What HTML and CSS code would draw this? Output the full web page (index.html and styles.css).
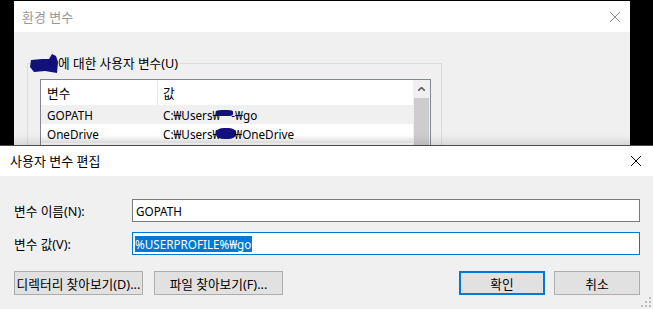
FILE: index.html
```html
<!DOCTYPE html>
<html lang="ko">
<head>
  <meta charset="UTF-8">
  <title>사용자 변수 편집</title>
  <link rel="stylesheet" href="styles.css">
</head>
<body>
  <div class="screen">
    <!-- Background window: 환경 변수 -->
    <div class="env-window">
      <div class="titlebar titlebar-back">
        <span class="title title-muted">환경 변수</span>
        <svg class="close close-muted" viewBox="0 0 10 10"><path d="M0 0L10 10M10 0L0 10"></path></svg>
      </div>
      <div class="env-body">
        <fieldset class="group">
          <legend class="group-label">
            <svg class="scribble" width="28" height="19" viewBox="0 0 28 19"><polygon points="1,6 12,5 19,5 22,0 26,2 28,8 27,19 15,17 4,18 0,13"></polygon></svg>
            <span class="ko">에 대한 사용자 변수(U)</span>
          </legend>
          <div class="list">
            <div class="list-rows">
              <div class="row row-head">
                <span class="col-name ko">변수</span>
                <span class="col-value col-sep ko">값</span>
              </div>
              <div class="row row-alt">
                <span class="col-name">GOPATH</span>
                <span class="col-value">C:₩Users₩<i class="blob blob-sm"></i>-₩go</span>
              </div>
              <div class="row row-fade">
                <span class="col-name">OneDrive</span>
                <span class="col-value">C:₩Users₩<i class="blob"></i>₩OneDrive</span>
              </div>
            </div>
            <div class="scrollbar">
              <div class="scroll-up">
                <svg viewBox="0 0 7 4"><path d="M0 4L3.5 0.5L7 4"></path></svg>
              </div>
              <div class="scroll-thumb"></div>
            </div>
          </div>
        </fieldset>
      </div>
    </div>

    <!-- Front dialog: 사용자 변수 편집 -->
    <div class="edit-dialog">
      <div class="titlebar titlebar-front">
        <span class="title">사용자 변수 편집</span>
        <svg class="close" viewBox="0 0 10 10"><path d="M0 0L10 10M10 0L0 10"></path></svg>
      </div>
      <div class="form">
        <div class="form-row">
          <label class="form-label ko">변수 이름(N):</label>
          <div class="input">GOPATH</div>
        </div>
        <div class="form-row mt-10">
          <label class="form-label ko">변수 값(V):</label>
          <div class="input input-focus"><span class="selected">%USERPROFILE%₩go</span></div>
        </div>
        <div class="actions">
          <div class="button-group">
            <button class="button button-wide">디렉터리 찾아보기(D)...</button>
            <button class="button button-wide">파일 찾아보기(F)...</button>
          </div>
          <div class="button-group button-group-right">
            <button class="button button-default">확인</button>
            <button class="button">취소</button>
          </div>
        </div>
      </div>
      <svg class="grip" viewBox="0 0 10 10">
        <rect x="8" y="0" width="2" height="2"></rect>
        <rect x="4" y="4" width="2" height="2"></rect>
        <rect x="8" y="4" width="2" height="2"></rect>
        <rect x="0" y="8" width="2" height="2"></rect>
        <rect x="4" y="8" width="2" height="2"></rect>
        <rect x="8" y="8" width="2" height="2"></rect>
      </svg>
    </div>
  </div>
</body>
</html>
```

FILE: styles.css
```css
/* Windows 10 style dialogs */
:root {
  --face: #f0f0f0;
  --accent: #0078d7;
  --field-border: #7a7a7a;
  --button-face: #e1e1e1;
  --button-border: #adadad;
}

body {
  margin: 0;
  background: #000;
  font-family: "Noto Sans", "Noto Sans CJK KR", sans-serif;
  font-size: 11.7px;
  color: #000;
  width: 653px;
  height: 309px;
  overflow: hidden;
}

.screen {
  padding-top: 1px;
}

/* Korean text runs a bit larger than the latin text */
.ko {font-size: 12.7px;}

.title {
  font-size: 13px;
  line-height: 16px;
}
.title-muted {color: #999;}

.titlebar {
  display: flex;
  align-items: center;
  justify-content: space-between;
  background: #fff;
}

.close {
  width: 10px;
  height: 10px;
  stroke: #000;
  stroke-width: 1;
  fill: none;
}
.close-muted {stroke: #8c8c8c;}

/* back window */
.env-window {
  margin-left: 14px;
  width: 616px;
  height: 144px;
  background: var(--face);
  overflow: hidden;
}

.titlebar-back {
  height: 31px;
  padding: 0 10px 0 8px;
}

.env-body {
  padding-top: 22px;
}

.group {
  margin: 0 0 0 13px;
  padding: 0;
  box-sizing: border-box;
  width: 415px;
  height: 200px;
  border: 1px solid #dcdcdc;
  min-width: 0;
}

.group-label {
  margin-left: 2px;
  padding: 0 2px 0 0;
  display: flex;
  align-items: center;
  line-height: 18px;
  height: 18px;
}

.scribble {
  display: block;
  flex-shrink: 0;
  width: 28px;
  height: 19px;
  margin-top: 1px;
  fill: #10127a;
}

.list {
  margin: 7px 0 0 12px;
  width: 391px;
  height: 80px;
  box-sizing: border-box;
  border: 1px solid #828790;
  background: #fff;
  display: flex;
}

.list-rows {
  width: 372px;
}

.row {
  display: flex;
  align-items: center;
  height: 19px;
}

.row-head {
  height: 25px;
  background: #fff;
}

.row-alt {background: #f0f0f0;}
.row-fade {background: linear-gradient(#fff, #fff 60%, #ececec);}

.col-name {
  width: 110px;
  padding-left: 6px;
}

.col-value {
  display: flex;
  align-items: center;
  padding-left: 6px;
  height: 100%;
}

.col-sep {
  border-left: 1px solid #e5e5e5;
  padding-left: 5px;
}

.blob {
  display: inline-block;
  width: 20px;
  height: 11px;
  background: #13117e;
  border-radius: 40%;
  margin: 0 -2px 0 -4px;
}
.blob-sm {width: 17px; height: 6px; border-radius: 30%; margin-bottom: 4px;}

.scrollbar {
  width: 17px;
  background: var(--face);
}

.scroll-up {
  height: 18px;
  display: flex;
  align-items: center;
  justify-content: center;
}

.scroll-up svg {
  width: 7px;
  height: 4px;
  fill: none;
  stroke: #606060;
  stroke-width: 1.6;
}

.scroll-thumb {
  margin-left: 1px;
  width: 15px;
  height: 60px;
  background: #cdcdcd;
}

/* front dialog */
.edit-dialog {
  position: relative;
  width: 653px;
  height: 164px;
  box-sizing: border-box;
  border-top: 1px solid #4a4a4a;
  background: var(--face);
  box-shadow: 0 -4px 8px rgba(0, 0, 0, 0.12);
}

.titlebar-front {
  height: 30px;
  padding: 0 12px 0 10px;
}

.form {
  padding: 23px 13px 0 14px;
}

.form-row {
  display: flex;
  align-items: center;
}

.mt-10 {margin-top: 10px;}

.form-label {
  width: 118px;
}

.input {
  width: 508px;
  height: 23px;
  box-sizing: border-box;
  border: 1px solid var(--field-border);
  background: #fff;
  padding-left: 3px;
  display: flex;
  align-items: center;
}

.input-focus {
  border-color: var(--accent);
  padding-left: 2px;
}

.selected {
  background: var(--accent);
  color: #fff;
  line-height: 16px;
  padding-right: 1px;
}

.actions {
  display: flex;
  justify-content: space-between;
  margin-top: 16px;
}

.button-group {
  display: flex;
  gap: 11px;
}
.button-group-right {gap: 9px;}

.button {
  height: 24px;
  width: 86px;
  box-sizing: border-box;
  border: 1px solid var(--button-border);
  background: var(--button-face);
  font-family: inherit;
  font-size: 12.7px;
  color: #000;
  padding: 0;
}

.button-wide {width: 129px;}

.button-default {
  border: 2px solid var(--accent);
}

.grip {
  position: absolute;
  right: 2px;
  bottom: 2px;
  width: 10px;
  height: 10px;
  fill: #bdbdbd;
}
```
